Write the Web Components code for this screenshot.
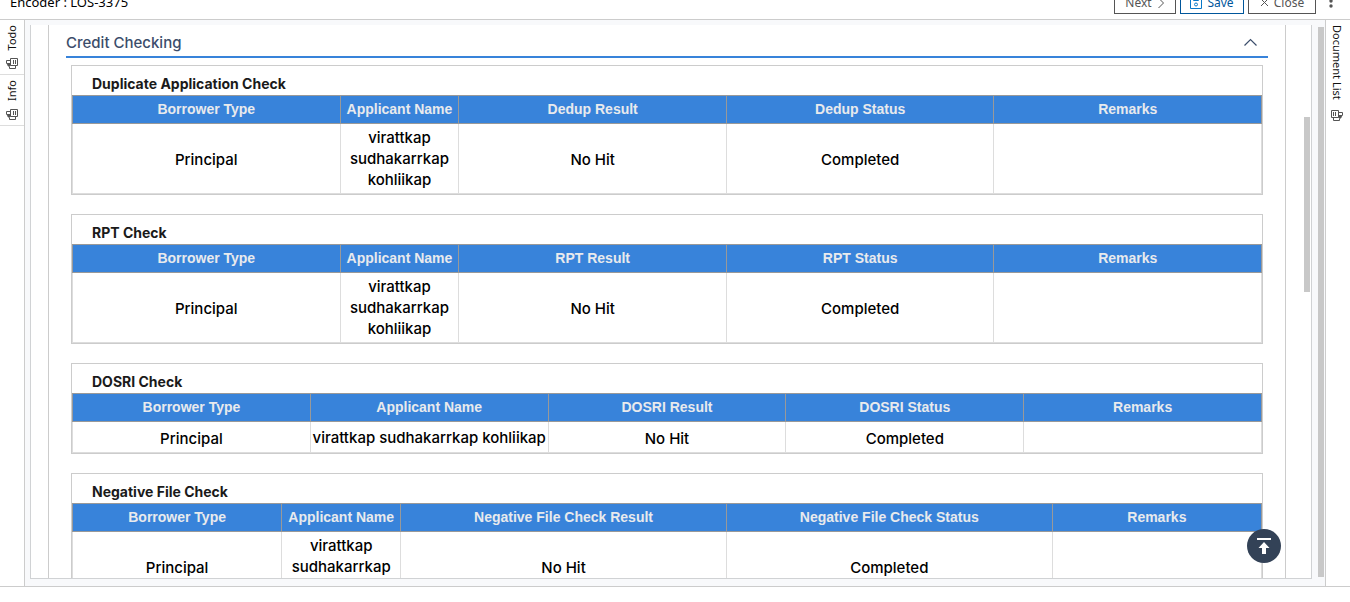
<!DOCTYPE html>
<html lang="en">
<head>
<meta charset="utf-8">
<title>Encoder : LOS-3375</title>
<style>
html,body{margin:0;height:100%;background:#fff}
body{font-family:Inter,"Open Sans",sans-serif;color:#000;overflow:hidden}
</style>
</head>
<body>
<los-app></los-app>
<script>
const define = (name, html, setup) => customElements.define(name, class extends HTMLElement {
  connectedCallback() {
    if (this.shadowRoot) return;
    const t = document.createElement('template');
    t.innerHTML = html;
    this.attachShadow({mode: 'open'}).append(t.content.cloneNode(true));
    if (setup) setup(this, this.shadowRoot);
  }
});

define('top-bar', `
<style>
:host{display:flex;align-items:flex-end;height:19px;overflow:hidden;border-bottom:1px solid #ccc;font-family:"Noto Sans","Open Sans",sans-serif;font-size:13px;background:#fff}
h1{margin:0;font:inherit;line-height:18px;padding:0 10px 8px;flex:1}
.actions{display:flex;gap:4px;padding:0 15px 5px 0;align-items:flex-end}
button{box-sizing:border-box;height:24px;display:flex;align-items:center;justify-content:center;font:12px/18px "Noto Sans","Open Sans",sans-serif;color:#555;background:#fff;border:1px solid #555;padding:1px 0 0;gap:5px}
.next{width:62px}.save{width:64px;border-color:#00569b;color:#00569b}.close{width:68px}
.more{width:8px;border:0;margin-left:7px;padding:0}
svg{display:block;flex:none}
</style>
<h1>Encoder : LOS-3375</h1>
<div class="actions">
<button class="next">Next<svg width="8" height="12" viewBox="0 0 8 12" fill="none" stroke="#555"><path d="M1.5 1 6.500 6l-5 5"/></svg></button>
<button class="save"><svg width="12" height="12" viewBox="0 0 12 12" fill="none" stroke="#0878c8"><path d="M.5.5h11v11H.5z"/><path d="M3.500 1v2.500h5V1"/><circle cx="6" cy="7.500" r="1.500"/></svg>Save</button>
<button class="close"><svg width="9" height="9" viewBox="0 0 9 9" fill="none" stroke="#555"><path d="m1 1 7 7M8 1 1 8"/></svg>Close</button>
<button class="more" aria-label="More"><svg width="4" height="16" viewBox="0 0 4 16" fill="#555"><circle cx="2" cy="2" r="1.700"/><circle cx="2" cy="7" r="1.700"/><circle cx="2" cy="12" r="1.700"/></svg></button>
</div>`);

define('side-tab', `
<style>
:host{display:block;border-bottom:1px solid #ddd}
:host([side=right]){border:0}
button{width:100%;border:0;background:none;padding:5px 0;display:flex;flex-direction:column;align-items:center;gap:8px;font:11px/16px "Noto Sans","Open Sans",sans-serif;color:#111}
span{writing-mode:vertical-rl;transform:rotate(180deg)}
:host([side=right]) span{transform:none}
:host([side=right]) svg{transform:scaleX(-1)}
:host([side=right]) button{gap:10px;padding-right:2px}
svg{display:block}
</style>
<button><span><slot></slot></span>
<svg width="12" height="11" viewBox="0 0 12 11" fill="none" stroke="#555"><path d="M4.500.5h7v7h-7z"/><path d="M7.500 2v4M9.500 2v4M9.500 8v2.500h-6V8.500M4 2.500H.500v3"/><path d="M.5 5h4v2.500L3 9 1.500 7.500z" fill="#555" stroke="none"/></svg>
</button>`);

define('section-header', `
<style>
:host{display:flex;align-items:center;border-bottom:2px solid #3883da;height:31px}
h2{margin:0;flex:1;font-size:15px;line-height:20px;font-weight:500;color:#3b4d6b;padding-top:4px}
button{border:0;background:none;padding:3px 11px 0 0}
svg{display:block}
</style>
<h2><slot></slot></h2><button aria-label="Collapse"><svg width="13" height="8" viewBox="0 0 13 8" fill="none" stroke="#3b4d6b" stroke-width="1.200"><path d="M.5 7.500 6.500 1.500l6 6"/></svg></button>`);

define('check-table', `
<style>
:host{display:block;border:1px solid #ccc;background:#fff}
h3{margin:0;padding:7px 20px 1px;font-size:14px;line-height:21px;font-weight:700;color:#1a1a1a}
table{width:100%;border-collapse:collapse;table-layout:fixed;font-size:14px;line-height:21px;text-align:center}
th{background:#3883da;color:#e8eaed;border:1px solid #999;padding:3px 0;font-family:"Liberation Sans",Arial,sans-serif;font-weight:700}
td{border:1px solid #ddd;border-top-color:#999;padding:5px 0 3px;font-size:15px;font-weight:500}
td.name{padding:3px 0}
tbody tr{height:31px}
</style>
<h3></h3>
<table><colgroup><col class="a"><col class="n"><col class="r"><col class="r"><col class="a"></colgroup>
<thead><tr><th scope="col">Borrower Type</th><th scope="col">Applicant Name</th><th scope="col" class="result"></th><th scope="col" class="status"></th><th scope="col">Remarks</th></tr></thead>
<tbody><tr><td>Principal</td><td class="name">virattkap sudhakarrkap kohliikap</td><td>No Hit</td><td>Completed</td><td></td></tr></tbody></table>`,
(host, root) => {
  const check = host.getAttribute('check');
  const prefix = host.getAttribute('prefix') || check;
  root.querySelector('h3').textContent = check + ' Check';
  root.querySelector('.result').textContent = prefix + ' Result';
  root.querySelector('.status').textContent = prefix + ' Status';
  const [a, n, r] = (host.getAttribute('columns') || '20% 20% 20%').split(' ');
  root.querySelectorAll('.a').forEach(c => c.style.width = a);
  root.querySelector('.n').style.width = n;
  root.querySelectorAll('.r').forEach(c => c.style.width = r);
});

define('los-app', `
<style>
:host{display:grid;grid-template-rows:auto minmax(0,1fr);height:100vh;box-sizing:border-box;padding-bottom:15px}
main{display:grid;grid-template-columns:24px minmax(0,1fr) 24px;min-height:0;border-bottom:1px solid #ccc}
nav,aside{background:#fff}
.work{background:#f8f9fb;border:solid #ccc;border-width:0 1px;padding:5px 0 7px 5px;display:flex;gap:6px;min-height:0}
.panel{flex:1;display:flex;min-height:0;background:#fff;border:1px solid #d0d2d4;border-top:0;overflow:hidden}
.content{flex:1;margin-left:17px;border:solid #ccc;border-width:0 1px;padding:0 17px;height:max-content}
.tables{display:flex;flex-direction:column;gap:19px;padding:7px 5px 20px}
.inner{box-sizing:border-box;width:25px;display:flex;justify-content:flex-end;padding:92px 1px 0 0}
.thumb{background:#c8c8c8;width:6px}
.inner .thumb{height:175px}
.outer{padding:2px 1px 2px 0;display:flex}
.top{position:absolute;right:69px;bottom:39px;width:34px;height:34px;border:0;border-radius:50%;padding:0;background:#334257;display:flex;align-items:center;justify-content:center}
</style>
<top-bar></top-bar>
<main>
<nav><side-tab>Todo</side-tab><side-tab>Info</side-tab></nav>
<div class="work">
<section class="panel">
<div class="content">
<section-header>Credit Checking</section-header>
<div class="tables">
<check-table check="Duplicate Application" prefix="Dedup" columns="22.500% 10% 22.500%"></check-table>
<check-table check="RPT" columns="22.500% 10% 22.500%"></check-table>
<check-table check="DOSRI"></check-table>
<check-table check="Negative File" prefix="Negative File Check" columns="17.600% 10% 27.400%"></check-table>
</div>
</div>
<div class="inner"><div class="thumb"></div></div>
</section>
<div class="outer"><div class="thumb"></div></div>
</div>
<aside><side-tab side="right">Document List</side-tab></aside>
</main>
<button class="top" aria-label="Back to top"><svg width="14" height="17" viewBox="0 0 14 17" fill="#fff"><path d="M0 0h14v2H0zM7 4l5.500 6H9v6H5v-6H1.500z"/></svg></button>`);
</script>
</body>
</html>
